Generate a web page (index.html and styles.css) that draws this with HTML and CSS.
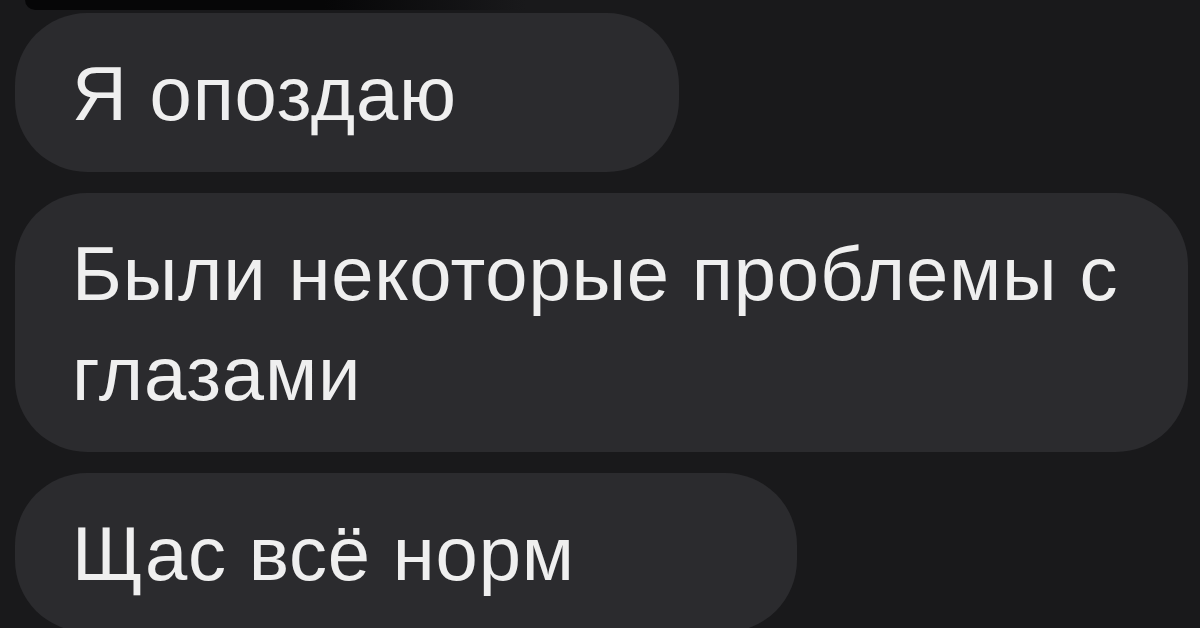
FILE: index.html
```html
<!DOCTYPE html>
<html lang="ru">
<head>
  <meta charset="UTF-8">
  <meta name="viewport" content="width=device-width, initial-scale=1.0">
  <title>Сообщения</title>
  <link rel="stylesheet" href="styles.css">
</head>
<body>
  <div class="chat">
    <div class="prev-edge"></div>
    <div class="bubble short">Я опоздаю</div>
    <div class="bubble">Были некоторые проблемы с глазами</div>
    <div class="bubble short">Щас всё норм</div>
  </div>
</body>
</html>
```

FILE: styles.css
```css
html, body {
  margin: 0;
  height: 100%;
  overflow: hidden;
}
body {
  background-color: #19191b;
  font-family: "Liberation Sans", Arial, sans-serif;
  color: #efefef;
}
.chat {
  display: flex;
  flex-direction: column;
  align-items: flex-start;
  gap: 21px;
  padding-left: 15px;
}
.prev-edge {
  width: 500px;
  height: 10px;
  margin-left: 10px;
  margin-bottom: -18px;
  background: linear-gradient(to right, #060607 60%, #19191b);
  border-bottom-left-radius: 10px;
}
.bubble {
  box-sizing: border-box;
  max-width: 1173px;
  padding: 31px 50px 28px 57px;
  background-color: #2b2b2e;
  border-radius: 72px;
  font-size: 76px;
  line-height: 100px;
  letter-spacing: 0.8px;
}
.bubble.short {
  padding-right: 222px;
}
```
